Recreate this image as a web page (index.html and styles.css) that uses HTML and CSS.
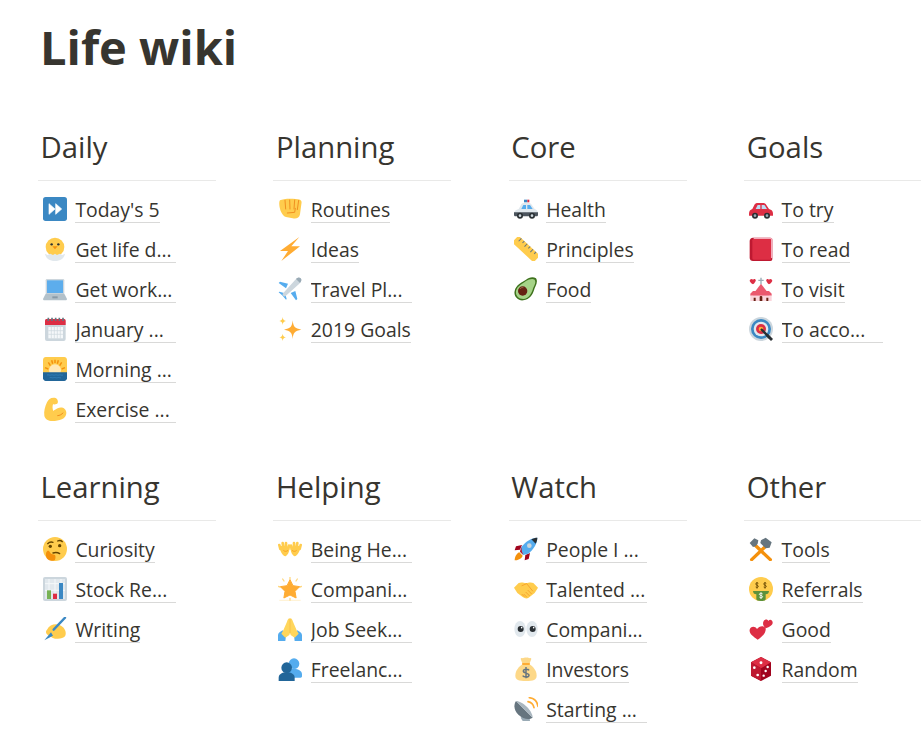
FILE: index.html
```html
<!DOCTYPE html>
<html lang="en">
<head>
    <meta charset="UTF-8">
    <meta name="viewport" content="width=device-width, initial-scale=1.0">
    <title>Life wiki</title>
    <link rel="stylesheet" href="styles.css">
</head>
<body>
    <h1 class="title">Life wiki</h1>

    <div class="columns">
        <!-- top row -->
        <section class="column">
            <h2>Daily</h2>
            <ul>
                <li><svg class="emoji" viewBox="0 0 36 36"><rect width="36" height="36" rx="4" fill="#3B88C3"/><path d="M9 10l9 8-9 8zM19 10l9 8-9 8z" fill="#fff" stroke="#fff" stroke-linejoin="round"/></svg><a>Today's 5</a></li>
                <li><svg class="emoji" viewBox="0 0 36 36"><circle cx="18" cy="15" r="14" fill="#FFCC4D"/><path d="M3 25c1 7 7 11 15 11s14-4 15-11l-4 2-4-2-4 2-3-2-3 2-4-2-4 2z" fill="#E1E8ED"/><circle cx="13" cy="11" r="1.8" fill="#292F33"/><circle cx="23" cy="11" r="1.8" fill="#292F33"/><path d="M14 14h8l-4 4.500z" fill="#F4900C"/></svg><a class="cut">Get life d...</a></li>
                <li><svg class="emoji" viewBox="0 0 36 36"><rect x="4" y="3" width="28" height="23" rx="2" fill="#CCD6DD"/><rect x="6" y="5" width="24" height="19" fill="#5DADEC"/><path d="M4 25h28l4 8c0 1-1 2-2 2H2c-1 0-2-1-2-2z" fill="#B3C1CA"/><rect x="14" y="29" width="8" height="3" fill="#8899A6"/></svg><a class="cut">Get work...</a></li>
                <li><svg class="emoji" viewBox="0 0 36 36"><rect x="3" y="3" width="31" height="33" rx="3" fill="#CCD6DD"/><path d="M3 12V6c0-2 1-3 3-3h25c2 0 3 1 3 3v6z" fill="#DD2E44"/><path d="M8 1v5M13.500 1v5M19 1v5M24.500 1v5M30 1v5" stroke="#66757F" stroke-width="2.5"/><path d="M8 15h22v17H8z" fill="#F5F8FA"/><path d="M12.500 15v17M17 15v17M21.500 15v17M26 15v17M8 20.500h22M8 26h22" stroke="#CCD6DD"/></svg><a class="cut">January ...</a></li>
                <li><svg class="emoji" viewBox="0 0 36 36"><path d="M4 0h28c2 0 4 2 4 4v20H0V4c0-2 2-4 4-4z" fill="#FFCC4D"/><path d="M18 4v5M8 8l3 5M28 8l-3 5M3 16l5 2M33 16l-5 2M13 5l1.500 5M23 5l-1.500 5" stroke="#F4900C" stroke-width="2.2"/><circle cx="18" cy="20" r="9" fill="#FFE8B6"/><path d="M0 23h36v9c0 2-2 4-4 4H4c-2 0-4-2-4-4z" fill="#226699"/><path d="M6 27c2-1 4 1 6 0s4 1 6 0 4 1 6 0 4 1 6 0M10 31c2-1 4 1 6 0s4 1 6 0 4 1 5 0" fill="none" stroke="#3B88C3"/></svg><a class="cut">Morning ...</a></li>
                <li><svg class="emoji" viewBox="0 0 36 36"><path d="M16 1C11 1 8 4 6 8 3 14 1 22 2 28c1 5 6 8 12 8 10 0 21-3 21-12 0-7-7-10-13-7-3 1.500-5 3-6.500 4-1.500-3-1.500-7-.5-10 3 .5 6 0 7-2 1-2 0-4-1-6-1-1.500-3-2-5-2z" fill="#FFCC4D"/><path d="M22 28c3 0 6-2 8-4" fill="none" stroke="#F19020" stroke-width="1.5" stroke-linecap="round"/></svg><a class="cut">Exercise ...</a></li>
            </ul>
        </section>

        <section class="column">
            <h2>Planning</h2>
            <ul>
                <li><svg class="emoji" viewBox="0 0 36 36"><path d="M3 5c5-3 21-3 30-1 2 1 3 3 2 7l-2 15c-1 6-6 7-11 6l-10-2c-4-1-6-5-8-9C2 15 1 7 3 5z" fill="#FFCC4D"/><path d="M10.500 5l1 13M17.500 4.500l.5 13.500M25 4.500l-1 13.500M14 24l11-1 1-6M31 5l-2 14" fill="none" stroke="#F19020" stroke-width="1.5" stroke-linecap="round"/></svg><a>Routines</a></li>
                <li><svg class="emoji" viewBox="0 0 36 36"><path d="M32 0L3 21h12L5 36l28-22H20z" fill="#FFAC33"/></svg><a>Ideas</a></li>
                <li><svg class="emoji" viewBox="0 0 36 36"><path d="M15 10L3 7l-2 2 11 8zM26 21l3 12-2 2-8-11z" fill="#55ACEE"/><path d="M9 24l-7-2-1 1 6 5 5 6 1-1-2-7z" fill="#55ACEE"/><path d="M34 2c-2-2-5-1-8 2L7 25c-1 2 2 5 4 4L32 10c3-3 4-6 2-8z" fill="#CCD6DD"/><path d="M34 2c-2-2-5-1-7 1l6 6c2-2 3-5 1-7z" fill="#99AAB5"/></svg><a class="cut">Travel Pl...</a></li>
                <li><svg class="emoji" viewBox="0 0 36 36"><path d="M22 5c1 10 3 12 13 14-10 2-12 4-13 14-1-10-3-12-13-14 10-2 12-4 13-14z" fill="#FFAC33"/><path d="M7 0c.5 4 1.500 5 5 6-3.500 1-4.500 2-5 6-.5-4-1.500-5-5-6 3.500-1 4.500-2 5-6zM7 25c.5 3.500 1.500 4.500 5 5.500-3.500 1-4.500 2-5 5.500-.5-3.500-1.500-4.500-5-5.500 3.500-1 4.500-2 5-5.500z" fill="#FFCC4D"/></svg><a>2019 Goals</a></li>
            </ul>
        </section>

        <section class="column">
            <h2>Core</h2>
            <ul>
                <li><svg class="emoji" viewBox="0 0 36 36"><rect x="15" y="4" width="5" height="4" fill="#3B88C3"/><rect x="20" y="4" width="3" height="4" fill="#DD2E44"/><path d="M0 25c0-4 3-6 7-7l4-7c.5-1 2-2 3-2h9c1 0 2 1 3 2l5 7c3 1 5 3 5 7z" fill="#E1E8ED"/><path d="M11 18l3-6h4v6zM20 12h4l4 6h-8z" fill="#55ACEE"/><path d="M0 23h36v4c0 1-1 2-2 2H2c-1 0-2-1-2-2z" fill="#4B545D"/><circle cx="9" cy="28" r="4.5" fill="#292F33"/><circle cx="9" cy="28" r="2" fill="#CCD6DD"/><circle cx="27" cy="28" r="4.5" fill="#292F33"/><circle cx="27" cy="28" r="2" fill="#CCD6DD"/></svg><a>Health</a></li>
                <li><svg class="emoji" viewBox="0 0 36 36"><g transform="rotate(43 18 18)"><rect x="-4" y="11" width="44" height="14" rx="2" fill="#FFCC4D"/><path d="M2 11v6M8 11v4M14 11v6M20 11v4M26 11v6M32 11v4" stroke="#66757F" stroke-width="1.5"/></g></svg><a>Principles</a></li>
                <li><svg class="emoji" viewBox="0 0 36 36"><path d="M33 2c-5-3-11-1-15 2C12 8 3 11 1 21c-2 8 5 15 13 14 10-1 14-9 16-15 1-5 7-12 3-18z" fill="#3E721D"/><path d="M31 4c-4-2-9 0-13 2C13 10 5 13 3 21c-1 7 4 12 11 12 8-1 12-8 14-14 1-5 6-10 3-15z" fill="#A6D388"/><circle cx="13" cy="21" r="7" fill="#662113"/><path d="M9 18c1-2 3-2.500 5-2" fill="none" stroke="#A0704A" stroke-width="1.5"/></svg><a>Food</a></li>
            </ul>
        </section>

        <section class="column">
            <h2>Goals</h2>
            <ul>
                <li><svg class="emoji" viewBox="0 0 36 36"><path d="M36 25c0-4-2-6-6-7l-4-6c-1-2-3-3-5-3h-8c-2 0-4 1-5 3l-3 6c-3 1-5 3-5 7v3h36z" fill="#DD2E44"/><path d="M10 18l3-6h4v6zM19 12h3c1 0 2 1 2 1l3 5h-8z" fill="#BBDDF5"/><circle cx="9" cy="28" r="4.5" fill="#292F33"/><circle cx="9" cy="28" r="2" fill="#99AAB5"/><circle cx="27" cy="28" r="4.5" fill="#292F33"/><circle cx="27" cy="28" r="2" fill="#99AAB5"/></svg><a>To try</a></li>
                <li><svg class="emoji" viewBox="0 0 36 36"><path d="M6 1h26c2 0 3 1 3 3v29c0 2-1 3-3 3H6c-3 0-5-2-5-5V6c0-3 2-5 5-5z" fill="#BE1931"/><path d="M7 1h25c2 0 3 1 3 3v27l-2 1V5c0-1-1-2-2-2H7z" fill="#F4ABBA"/><path d="M7 3h24c1 0 2 1 2 2v29H7c-1 0-2-1-2-2V5c0-1 1-2 2-2z" fill="#DD2E44"/></svg><a>To read</a></li>
                <li><svg class="emoji" viewBox="0 0 36 36"><path d="M17 1h2v3h3v2h-3v5h-2V6h-3V4h3z" fill="#99AAB5"/><path d="M18 10L6 26h24z" fill="#EA596E"/><path d="M6 25h24v11H6z" fill="#F4ABBA"/><path d="M2 25l4-4h24l4 4v3H2z" fill="#EA596E"/><path d="M2 28h32v8H2z" fill="#FBD5DC"/><path d="M16 36v-6c0-2 4-2 4 0v6zM7 36v-5h3v5zM26 36v-5h3v5z" fill="#662113"/><path d="M6 4c2-2 5 0 4 2-1 3-4 5-4 5S2 9 1 6c0-2 3-4 5-2zM30 4c2-2 5 0 5 2-1 3-5 5-5 5s-3-2-4-5c-1-2 2-4 4-2z" fill="#DD2E44"/></svg><a>To visit</a></li>
                <li><svg class="emoji" viewBox="0 0 36 36"><circle cx="18" cy="18" r="18" fill="#CCD6DD"/><circle cx="18" cy="18" r="15" fill="#3B88C3"/><circle cx="18" cy="18" r="11" fill="#E1E8ED"/><circle cx="18" cy="18" r="7.5" fill="#DD2E44"/><circle cx="18" cy="18" r="3.5" fill="#FFAC33"/><path d="M18 18l14 14" stroke="#292F33" stroke-width="3.5"/><path d="M28 25l8 8-3 3-8-8z" fill="#292F33"/></svg><a class="cut">To acco...</a></li>
            </ul>
        </section>

        <!-- bottom row -->
        <section class="column">
            <h2>Learning</h2>
            <ul>
                <li><svg class="emoji" viewBox="0 0 36 36"><circle cx="18" cy="18" r="18" fill="#FFCC4D"/><path d="M7 10c2-2 5-3 8-2M22 6c2-1 5-1 7 1" fill="none" stroke="#664500" stroke-width="2" stroke-linecap="round"/><circle cx="11" cy="14" r="2.5" fill="#664500"/><circle cx="25" cy="13" r="2.5" fill="#664500"/><path d="M15 24c3-1 7-1 10 1" fill="none" stroke="#664500" stroke-width="2" stroke-linecap="round"/><path d="M5 23c-1 3-1 9 3 11 3 2 9 2 10 0 1-2 1-6 0-7l-6-2-3-4c-2-1-3 0-4 2z" fill="#F4900C"/></svg><a>Curiosity</a></li>
                <li><svg class="emoji" viewBox="0 0 36 36"><rect width="36" height="36" rx="3" fill="#CCD6DD"/><path d="M3 3h30v30H3z" fill="#E1E8ED"/><path d="M9 3v30M18 3v30M27 3v30M3 10h30M3 20h30" stroke="#F5F8FA" stroke-width="1.5"/><rect x="6" y="20" width="6" height="13" fill="#77B255"/><rect x="15" y="25" width="6" height="8" fill="#DD2E44"/><rect x="24" y="9" width="6" height="24" fill="#3B88C3"/></svg><a class="cut">Stock Re...</a></li>
                <li><svg class="emoji" viewBox="0 0 36 36"><path d="M6 19c4-8 14-10 21-6 6 3 9 11 6 16-3 4-13 5-19 2-3-2-5-2-8-5-2-2-2-5 0-7z" fill="#FFCC4D"/><path d="M33 1L16 19" stroke="#3B88C3" stroke-width="3.5" stroke-linecap="round"/><path d="M12 23L2 35l13-7z" fill="#3B88C3"/></svg><a>Writing</a></li>
            </ul>
        </section>

        <section class="column">
            <h2>Helping</h2>
            <ul>
                <li><svg class="emoji" viewBox="0 0 36 36"><path d="M3.500 18l-1.500-6M8 15L7 9M12 15V9M15.500 18l1-5" stroke="#FFCC4D" stroke-width="4" stroke-linecap="round"/><path d="M32.500 18l1.500-6M28 15l1-6M24 15V9M20.500 18l-1-5" stroke="#FFCC4D" stroke-width="4" stroke-linecap="round"/><path d="M2 14c2-1 14-2 15 4 0 5-3 10-6 11-4 0-8-8-9-15zM34 14c-2-1-14-2-15 4 0 5 3 10 6 11 4 0 8-8 9-15z" fill="#FFCC4D"/><path d="M8 20c2 2 5 2 7 0M21 20c2 2 5 2 7 0" fill="none" stroke="#F4900C"/></svg><a class="cut">Being He...</a></li>
                <li><svg class="emoji" viewBox="0 0 36 36"><path d="M18 0v3M18 32v4M0 14l3 1M36 14l-3 1M7 3l2 3M29 3l-2 3" stroke="#FFD983" stroke-width="2" stroke-linecap="round"/><path d="M2 35h32" stroke="#FFE8B6"/><path d="M18 4l4.500 9 10 1.500-7 7 1.700 10L18 27l-9.200 4.500 1.700-10-7-7 10-1.500z" fill="#FFAC33" stroke="#FFAC33" stroke-width="1.5" stroke-linejoin="round"/></svg><a class="cut">Compani...</a></li>
                <li><svg class="emoji" viewBox="0 0 36 36"><path d="M0 36V27c0-3 4-5 7-7l5 8-1 8zM36 36V27c0-3-4-5-7-7l-5 8 1 8z" fill="#55ACEE"/><path d="M17.500 2c-2 0-3 2-4 5L8 20l-3 5 6 6 6-4 1-3 1 3 6 4 6-6-3-5-5.500-13c-1-3-2-5-4-5-.5 0-.5 1-.5 2 0-1 0-2-.5-2z" fill="#FFD65C"/><path d="M18 3v21" stroke="#F4B942"/></svg><a class="cut">Job Seek...</a></li>
                <li><svg class="emoji" viewBox="0 0 36 36"><circle cx="24" cy="10" r="8" fill="#55ACEE"/><path d="M12 28c0-6 5-10 12-10s12 3 12 8v3c0 1-1 2-2 2H14z" fill="#55ACEE"/><circle cx="13" cy="16" r="8" fill="#226699"/><path d="M1 36v-5c0-5 5-8 12-8s12 3 12 8v5z" fill="#226699"/></svg><a class="cut">Freelanc...</a></li>
            </ul>
        </section>

        <section class="column">
            <h2>Watch</h2>
            <ul>
                <li><svg class="emoji" viewBox="0 0 36 36"><path d="M8 23c-5 2-7 8-7 12 4 0 10-2 12-7z" fill="#F4900C"/><path d="M12 12L3 14l-2 6 8-1zM24 24l-2 9-6 2 1-8z" fill="#A0041E"/><path d="M35 1c-9 0-18 6-24 14l-2 7 5 5 7-2c8-6 14-15 14-24z" fill="#55ACEE"/><path d="M35 1c-3 0-6 1-9 2.500l6.500 6.500C34 7 35 4 35 1z" fill="#292F33"/><circle cx="23" cy="13" r="3.5" fill="#CCD6DD"/><path d="M11 15l-2 7 5 5-2-5z" fill="#BE1931"/></svg><a class="cut">People I ...</a></li>
                <li><svg class="emoji" viewBox="0 0 36 36"><path d="M0 16l7-7c4-2 8 0 11 0s7-2 11 0l7 7-5 8-9 7c-3 2-6 1-9-1l-8-6z" fill="#FFCC4D"/><path d="M12 13l7-3 9 11M15 29l-3-3M19 30l-4-4M23 28l-5-5M26 25l-5-5" fill="none" stroke="#F19020" stroke-linecap="round"/></svg><a class="cut">Talented ...</a></li>
                <li><svg class="emoji" viewBox="0 0 36 36"><ellipse cx="9" cy="18" rx="8.5" ry="12" fill="#E1E8ED"/><ellipse cx="27" cy="18" rx="8.5" ry="12" fill="#E1E8ED"/><circle cx="10" cy="18" r="4.5" fill="#292F33"/><circle cx="28" cy="18" r="4.5" fill="#292F33"/><circle cx="11.500" cy="16" r="1.2" fill="#fff"/><circle cx="29.500" cy="16" r="1.2" fill="#fff"/></svg><a class="cut">Compani...</a></li>
                <li><svg class="emoji" viewBox="0 0 36 36"><path d="M2 28c0-8 6-14 11-17h10c5 3 11 9 11 17 0 6-5 8-16 8S2 34 2 28z" fill="#FDD888"/><path d="M13 11L10 3c0-1 2-2 3-1 2-1 4-2 5-1 2-1 4 0 5 1 1-1 3 0 3 1l-3 8z" fill="#FDD888"/><rect x="12" y="9" width="12" height="3" rx="1.5" fill="#FFAC33"/><path d="M22.500 20c-1-2-8-2.500-8.500 1s9 3 8.500 6.500-8 3-9.500.5M18 15v17" fill="none" stroke="#67757F" stroke-width="2.2"/></svg><a>Investors</a></li>
                <li><svg class="emoji" viewBox="0 0 36 36"><path d="M15 26l-5 5 3 5h11l-1-7-3-4z" fill="#99AAB5"/><path d="M3 6c-4 6-3 15 4 21s15 8 21 4z" fill="#66757F"/><path d="M3 6l25 25c0-10-15-25-25-25z" fill="#A9B6BF"/><path d="M21 7c5 1 8 4 9 9M23 1c7 1 12 6 13 13" fill="none" stroke="#FFAC33" stroke-width="2.5" stroke-linecap="round"/></svg><a class="cut">Starting ...</a></li>
            </ul>
        </section>

        <section class="column">
            <h2>Other</h2>
            <ul>
                <li><svg class="emoji" viewBox="0 0 36 36"><path d="M9 12l23 22M27 12L4 34" stroke="#F4900C" stroke-width="5" stroke-linecap="round"/><path d="M8 2L1 9l5 6 4-1 3-4 1-5zM25 1l-7 4-1 4 8 8 6-1 3-8z" fill="#66757F"/></svg><a>Tools</a></li>
                <li><svg class="emoji" viewBox="0 0 36 36"><circle cx="18" cy="18" r="18" fill="#FFCC4D"/><path d="M14 9.500c-1-1-4-1-4 1s4 1.500 4 3.500-3 2-4 1M12 7.500v10M26 9.500c-1-1-4-1-4 1s4 1.500 4 3.500-3 2-4 1M24 7.500v10" fill="none" stroke="#664500" stroke-width="1.3"/><path d="M6 21h24c0 3-2 5-5 5v7c0 2-2 3-7 3s-7-1-7-3v-7c-3 0-5-2-5-5z" fill="#5C913B"/><path d="M20.500 25.500c-1-1.500-5-1.500-5 .5s5 1.500 5 3.500-4 2-5 .5M18 23v10" fill="none" stroke="#fff" stroke-width="1.3"/></svg><a>Referrals</a></li>
                <li><svg class="emoji" viewBox="0 0 36 36"><path d="M13 34C6 29 0 25 1 19c1-5 8-6 11-1 3-5 11-6 13-1 1 6-5 13-12 17z" fill="#DD2E44"/><path d="M25 17c-4-3-5-8-3-11 2-3 6-3 7 0 2-3 6-2 6.500 2 .5 4-4.500 7-10.500 9z" fill="#DD2E44"/></svg><a>Good</a></li>
                <li><svg class="emoji" viewBox="0 0 36 36"><path d="M18 0L3 8v20l15 8 15-8V8z" fill="#A0041E"/><path d="M18 0L3 8l15 9 15-9z" fill="#DD2E44"/><path d="M3 8v20l15 8V17z" fill="#BE1931"/><circle cx="18" cy="8.500" r="2.2" fill="#fff"/><circle cx="8" cy="16" r="2" fill="#fff"/><circle cx="13" cy="27" r="2" fill="#fff"/><circle cx="28" cy="15" r="1.8" fill="#fff"/><circle cx="25" cy="21" r="1.8" fill="#fff"/><circle cx="22" cy="28" r="1.8" fill="#fff"/></svg><a>Random</a></li>
            </ul>
        </section>
    </div>
</body>
</html>
```

FILE: styles.css
```css
html, body {
    margin: 0;
    background: #fff;
    overflow-x: hidden;
}
body {
    font-family: "Open Sans", "Noto Sans", sans-serif;
    color: #37352f;
    padding: 17px 0 0 38px;
}
.title {
    margin: 0 0 51px 2px;
    font-size: 47px;
    line-height: 60px;
    font-weight: 700;
}
.columns {
    display: grid;
    grid-template-columns: repeat(4, 178px);
    column-gap: 57.4px;
    row-gap: 37px;
}
.column h2 {
    margin: 0 0 10px;
    padding: 0 0 14px 2.5px;
    font-size: 29.3px;
    line-height: 38px;
    font-weight: 450;
    border-bottom: 1px solid #e9e9e8;
}
.column ul {
    list-style: none;
    margin: 0;
    padding: 0;
}
.column li {
    display: flex;
    height: 40px;
    padding-left: 5px;
}
.emoji {
    flex: none;
    width: 24px;
    height: 24px;
    margin: 6px 8.4px 0 0;
}
.column a {
    align-self: flex-start;
    margin-top: 6px;
    font-size: 19.4px;
    line-height: 25px;
    font-weight: 450;
    white-space: nowrap;
    border-bottom: 1px solid #d9d9d8;
}
.column a.cut {
    width: 101px;
    overflow: hidden;
}
```
